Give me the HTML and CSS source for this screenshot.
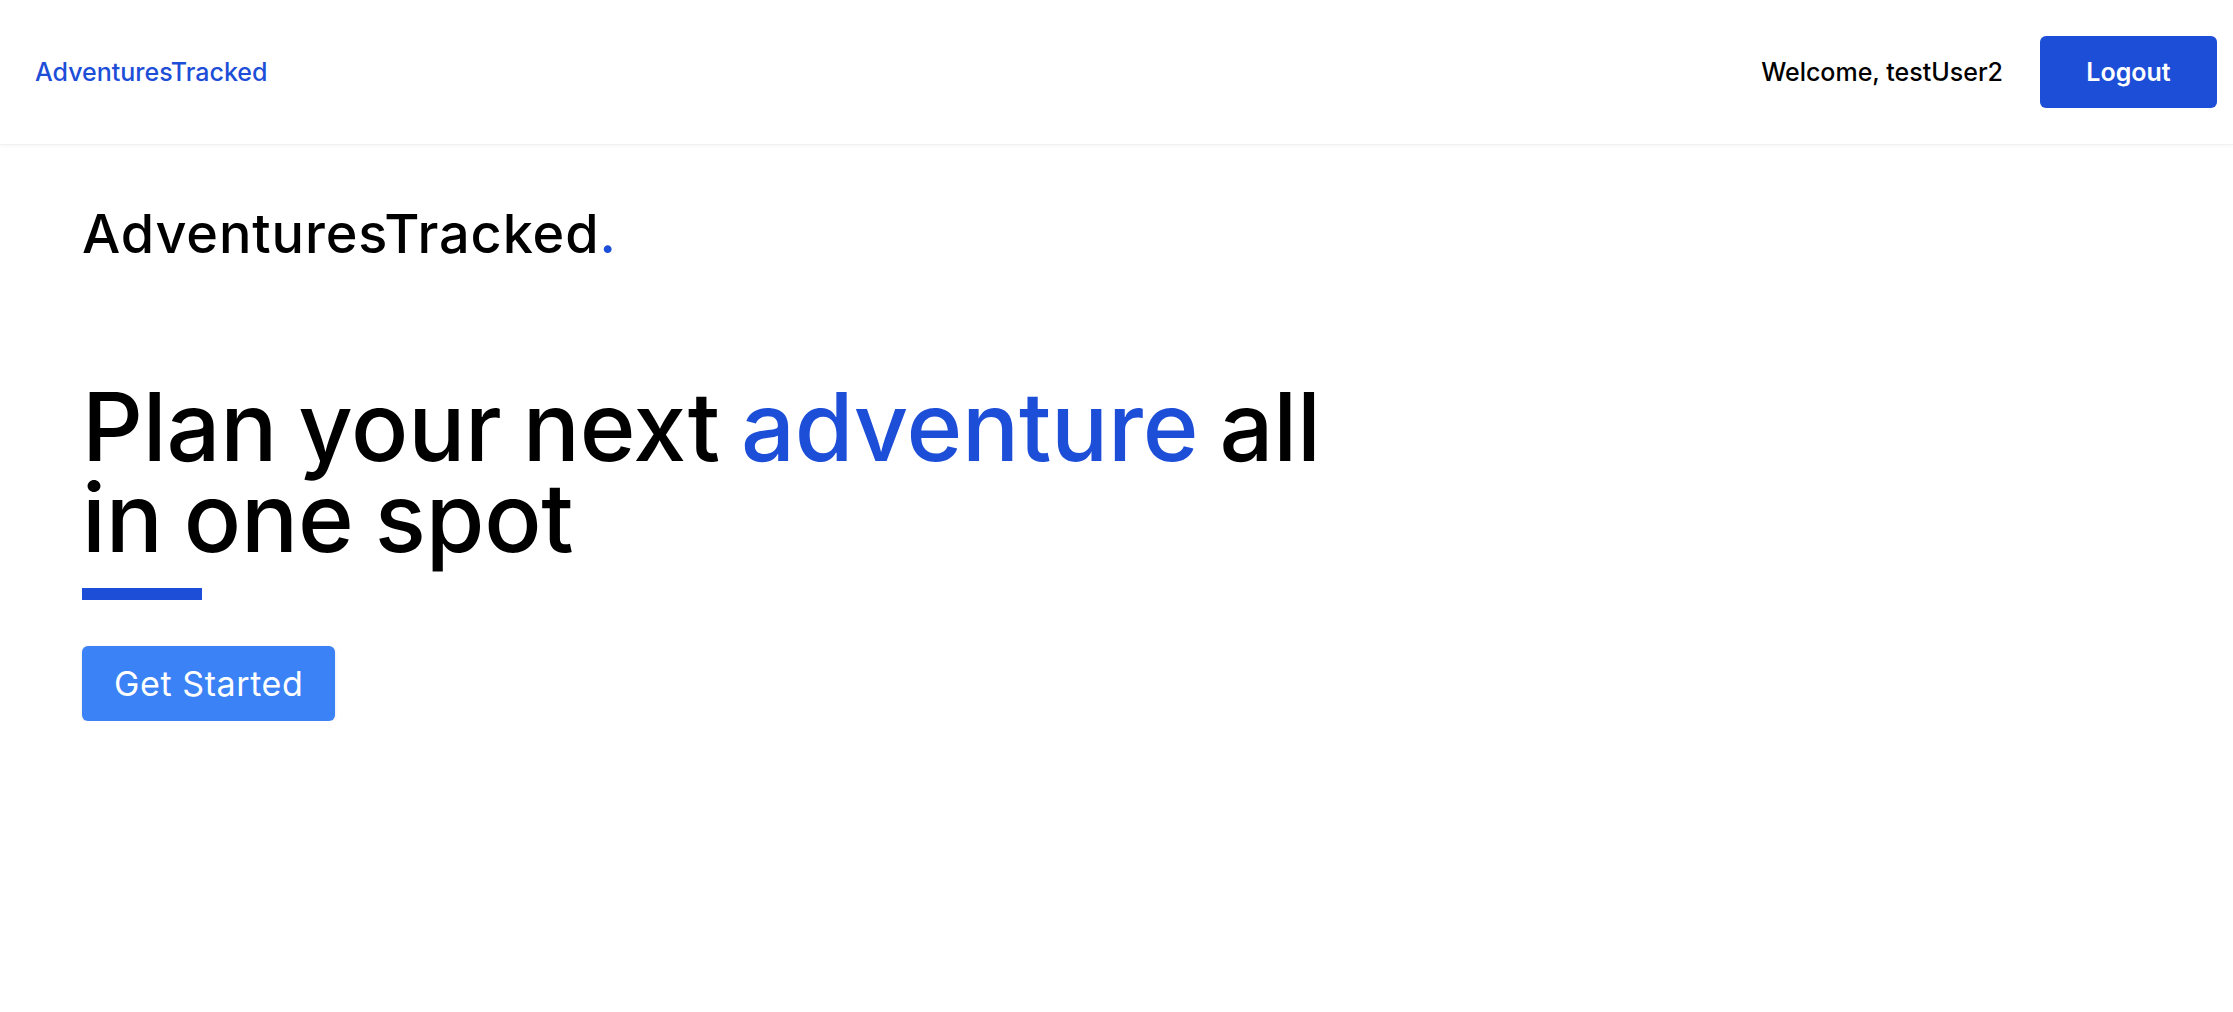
FILE: index.html
```html
<!DOCTYPE html>
<html lang="en">
<head>
<meta charset="utf-8">
<title>AdventuresTracked</title>
<link rel="stylesheet" href="styles.css">
</head>
<body>
<nav class="nav">
  <a class="nav-logo" href="#">AdventuresTracked</a>
  <div class="nav-right">
    <span class="welcome">Welcome, testUser2</span>
    <button class="logout">Logout</button>
  </div>
</nav>
<main class="hero">
  <div class="brand">AdventuresTracked<span class="dot">.</span></div>
  <h1 class="headline"><span class="line">Plan your next <span class="accent">adventure</span> all</span><span class="line">in one spot</span></h1>
  <div class="bar"></div>
  <button class="cta">Get Started</button>
</main>
</body>
</html>
```
FILE: styles.css
```css
* { box-sizing: border-box; }
html, body { margin: 0; padding: 0; background: #ffffff; }
body {
  font-family: "Inter", "Noto Sans", sans-serif;
  color: #000;
}
.nav {
  height: 145px;
  display: flex;
  align-items: center;
  justify-content: space-between;
  padding: 0 16px 0 35px;
  border-bottom: 1px solid #f1f1f1;
  box-shadow: 0 2px 4px rgba(0,0,0,0.03);
}
.nav-logo {
  font-size: 25px;
  font-weight: 500;
  color: #1d4ed8;
  text-decoration: none;
}
.nav-right {
  display: flex;
  align-items: center;
  gap: 37px;
}
.welcome {
  font-size: 25px;
  font-weight: 500;
}
.logout {
  width: 177px;
  height: 72px;
  border: none;
  border-radius: 6px;
  background: #1d4ed8;
  color: #fff;
  font-family: inherit;
  font-size: 25px;
  font-weight: 600;
  cursor: pointer;
}
.hero {
  padding: 62px 0 0 82px;
  display: flex;
  flex-direction: column;
  align-items: flex-start;
}
.brand {
  font-size: 54px;
  line-height: 54px;
  font-weight: 500;
  letter-spacing: 0.9px;
}
.dot { color: #1d4ed8; }
.headline {
  margin: 121px 0 0 0;
  font-size: 95px;
  line-height: 90.6px;
  font-weight: 500;
  letter-spacing: -0.2px;
  word-spacing: -4px;
  display: flex;
  flex-direction: column;
}
.line {
  display: block;
  height: 90.6px;
  white-space: nowrap;
}
.accent {
  color: #1d4ed8;
}
.bar {
  width: 120px;
  height: 12px;
  background: #1d4ed8;
  margin-top: 25px;
}
.cta {
  margin-top: 46px;
  height: 75px;
  padding: 0 32px;
  border: none;
  border-radius: 6px;
  background: #3b82f6;
  color: #fff;
  font-family: inherit;
  font-size: 34px;
  font-weight: 400;
  letter-spacing: 0.6px;
  box-shadow: 0 1px 3px rgba(0,0,0,0.12);
  cursor: pointer;
}
```
